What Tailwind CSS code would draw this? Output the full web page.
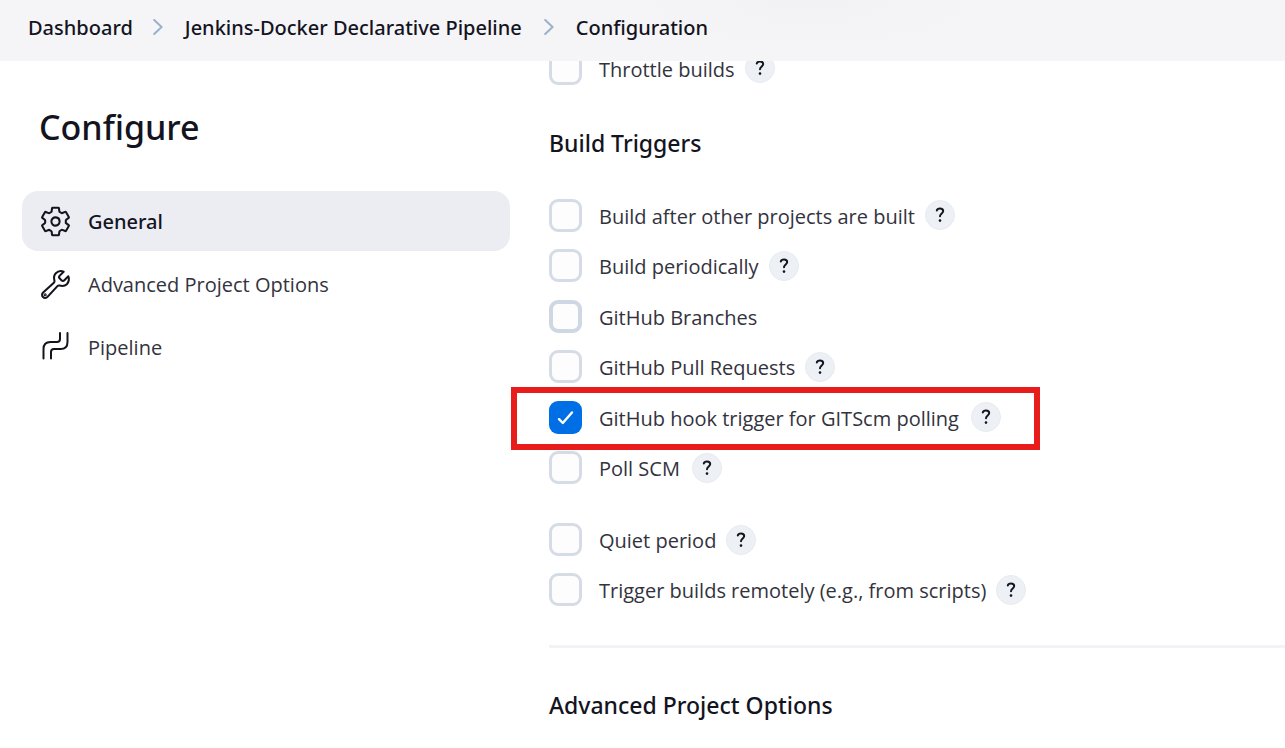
<!DOCTYPE html>
<html lang="en">
<head>
<meta charset="utf-8">
<meta name="viewport" content="width=device-width, initial-scale=1">
<title>Configure</title>
<script src="https://cdn.jsdelivr.net/npm/@tailwindcss/browser@4"></script>
</head>
<body class="bg-white font-['Open_Sans','Noto_Sans',sans-serif] text-[20px] leading-[33px] text-[#33333e] overflow-hidden">
<header class="sticky top-0 z-10 h-[61px] bg-[#f5f5f7] bg-[radial-gradient(ellipse_180px_50px_at_810px_0px,#f2f2f4,#f5f5f7)] pl-7 pb-[7px] flex items-center">
  <nav aria-label="Breadcrumb" class="flex items-center font-['Noto_Sans',sans-serif] font-medium text-[#14141f] whitespace-nowrap">
    <a href="#">Dashboard</a>
    <svg class="w-[10px] h-4 ml-5 mr-[22px]" viewBox="0 0 10 16" fill="none" stroke="#9bb0cc" stroke-width="2" stroke-linecap="round" stroke-linejoin="round" aria-hidden="true"><path d="M1.2 1 8.6 8 1.2 15"/></svg>
    <a href="#">Jenkins-Docker Declarative Pipeline</a>
    <svg class="w-[10px] h-4 ml-[22px] mr-[22px]" viewBox="0 0 10 16" fill="none" stroke="#9bb0cc" stroke-width="2" stroke-linecap="round" stroke-linejoin="round" aria-hidden="true"><path d="M1.2 1 8.6 8 1.2 15"/></svg>
    <a href="#">Configuration</a>
  </nav>
</header>
<div class="flex">
  <aside class="w-[510px] shrink-0 pl-[22px] pt-[42px]">
    <h1 class="pl-[17px] font-['Noto_Sans',sans-serif] text-[34px] leading-[48px] font-medium text-[#14141f]">Configure</h1>
    <nav aria-label="Sections" class="mt-10 flex flex-col gap-[3px]">
      <a href="#general" class="flex items-center h-[60px] rounded-2xl bg-[#ecedf3] pl-[17px] gap-4 font-['Noto_Sans',sans-serif] font-medium text-[#14141f]">
        <svg class="size-[33px]" viewBox="0 0 512 512" fill="none" stroke="#14141f" stroke-width="32" stroke-linecap="round" stroke-linejoin="round" aria-hidden="true"><path d="M262.29 192.31a64 64 0 1 0 57.4 57.4 64.13 64.13 0 0 0-57.4-57.4zM416.39 256a154.34 154.34 0 0 1-1.53 20.79l45.21 35.46a10.81 10.81 0 0 1 2.45 13.75l-42.77 74a10.81 10.81 0 0 1-13.14 4.59l-44.9-18.08a16.11 16.11 0 0 0-15.17 1.75A164.48 164.48 0 0 1 325 400.8a15.94 15.94 0 0 0-8.82 12.14l-6.73 47.89a11.08 11.08 0 0 1-10.68 9.17h-85.54a11.11 11.11 0 0 1-10.69-8.87l-6.72-47.82a16.07 16.07 0 0 0-9-12.22 155.3 155.3 0 0 1-21.46-12.57 16 16 0 0 0-15.11-1.71l-44.89 18.07a10.81 10.81 0 0 1-13.14-4.58l-42.77-74a10.8 10.8 0 0 1 2.45-13.75l38.21-30a16.05 16.05 0 0 0 6-14.08c-.36-4.17-.58-8.33-.58-12.5s.21-8.27.58-12.35a16 16 0 0 0-6.07-13.94l-38.19-30A10.81 10.81 0 0 1 49.48 186l42.77-74a10.81 10.81 0 0 1 13.14-4.59l44.9 18.08a16.11 16.11 0 0 0 15.17-1.75A164.48 164.48 0 0 1 187 111.2a15.94 15.94 0 0 0 8.82-12.14l6.73-47.89A11.08 11.08 0 0 1 213.23 42h85.54a11.11 11.11 0 0 1 10.69 8.87l6.72 47.82a16.07 16.07 0 0 0 9 12.22 155.3 155.3 0 0 1 21.46 12.57 16 16 0 0 0 15.11 1.71l44.89-18.07a10.81 10.81 0 0 1 13.14 4.58l42.77 74a10.8 10.8 0 0 1-2.45 13.75l-38.21 30a16.05 16.05 0 0 0-6.05 14.08c.33 4.14.55 8.3.55 12.47z"/></svg>
        General
      </a>
      <a href="#advanced" class="flex items-center h-[60px] pl-[17px] gap-4">
        <svg class="size-[33px]" viewBox="0 0 512 512" fill="none" stroke="#14141f" stroke-width="32" stroke-linecap="round" stroke-linejoin="round" aria-hidden="true"><path d="M393.87 190a32.1 32.1 0 0 1-45.25 0l-26.57-26.57a32.09 32.09 0 0 1 0-45.26L382.19 58a1 1 0 0 0-.3-1.64c-38.82-16.64-89.15-8.16-121.11 23.57-30.58 30.35-32.32 76-21.12 115.84a31.93 31.93 0 0 1-9.06 32.08L64 380a48.17 48.17 0 1 0 68 68l153.86-167a31.93 31.93 0 0 1 31.6-9.13c39.54 10.59 84.54 8.6 114.72-21.19 32.49-32 39.5-88.56 23.75-120.93a1 1 0 0 0-1.6-.26z"/><circle cx="96" cy="416" r="8" fill="#14141f"/></svg>
        Advanced Project Options
      </a>
      <a href="#pipeline" class="flex items-center h-[60px] pl-[17px] gap-4">
        <svg class="size-[33px]" viewBox="0 0 33 33" fill="none" stroke="#14141f" stroke-width="2" stroke-linecap="round" aria-hidden="true"><path d="M21 2v6q0 3-3 3h-6.500q-7 0-7 7v9.500M28.500 2v9q0 7-7 7H15q-3 0-3 3v6.500"/></svg>
        Pipeline
      </a>
    </nav>
  </aside>
  <main class="flex-1 pl-[39px] -mt-[9px]">
    <div class="flex items-start">
      <input id="c0" type="checkbox" class="appearance-none size-[33px] rounded-[9px] border-3 border-[#d5dce6] bg-[#fdfdfd] shrink-0">
      <label for="c0" class="pl-[17px] pr-[10px] mt-px">Throttle builds</label>
      <button type="button" aria-label="Help: Throttle builds" class="mt-px size-[30px] rounded-full border border-[#e6ebf0] bg-[#edf1f5] flex items-center justify-center"><svg class="w-[10px] h-4" viewBox="0 0 10 16" fill="none" stroke="#14141f" stroke-width="2" stroke-linecap="round" stroke-linejoin="round"><path d="M1.8 3.6Q2.3 1.5 5 1.5q3.2 0 3.2 2.6c0 2.3-3.2 2.4-3.2 5.2"/><path d="M5 13.6v.01" stroke-width="2.6"/></svg></button>
    </div>
    <h2 class="mt-10 font-['Noto_Sans',sans-serif] text-[23px] leading-[34px] font-medium text-[#14141f]">Build Triggers</h2>
    <div class="mt-[39px]">
      <div class="flex items-start h-[50px]">
        <input id="c1" type="checkbox" class="appearance-none size-[33px] rounded-[9px] border-3 border-[#d5dce6] bg-[#fdfdfd] shrink-0">
        <label for="c1" class="pl-[17px] pr-[10px] mt-px">Build after other projects are built</label>
        <button type="button" aria-label="Help: Build after other projects are built" class="mt-px size-[30px] rounded-full border border-[#e6ebf0] bg-[#edf1f5] flex items-center justify-center"><svg class="w-[10px] h-4" viewBox="0 0 10 16" fill="none" stroke="#14141f" stroke-width="2" stroke-linecap="round" stroke-linejoin="round"><path d="M1.8 3.6Q2.3 1.5 5 1.5q3.2 0 3.2 2.6c0 2.3-3.2 2.4-3.2 5.2"/><path d="M5 13.6v.01" stroke-width="2.6"/></svg></button>
      </div>
      <div class="flex items-start h-[51px]">
        <input id="c2" type="checkbox" class="appearance-none size-[33px] rounded-[9px] border-3 border-[#d5dce6] bg-[#fdfdfd] shrink-0">
        <label for="c2" class="pl-[17px] pr-[10px] mt-px">Build periodically</label>
        <button type="button" aria-label="Help: Build periodically" class="mt-[2px] size-[30px] rounded-full border border-[#e6ebf0] bg-[#edf1f5] flex items-center justify-center"><svg class="w-[10px] h-4" viewBox="0 0 10 16" fill="none" stroke="#14141f" stroke-width="2" stroke-linecap="round" stroke-linejoin="round"><path d="M1.8 3.6Q2.3 1.5 5 1.5q3.2 0 3.2 2.6c0 2.3-3.2 2.4-3.2 5.2"/><path d="M5 13.6v.01" stroke-width="2.6"/></svg></button>
      </div>
      <div class="flex items-start h-[50px]">
        <input id="c3" type="checkbox" class="appearance-none size-[33px] rounded-[9px] border-4 border-[#ced7e3] bg-[#fdfdfd] shrink-0">
        <label for="c3" class="pl-[17px] pr-[10px] mt-px">GitHub Branches</label>
      </div>
      <div class="flex items-start h-[51px]">
        <input id="c4" type="checkbox" class="appearance-none size-[33px] rounded-[9px] border-3 border-[#d5dce6] bg-[#fdfdfd] shrink-0">
        <label for="c4" class="pl-[17px] pr-[10px] mt-px">GitHub Pull Requests</label>
        <button type="button" aria-label="Help: GitHub Pull Requests" class="mt-[2px] size-[30px] rounded-full border border-[#e6ebf0] bg-[#edf1f5] flex items-center justify-center"><svg class="w-[10px] h-4" viewBox="0 0 10 16" fill="none" stroke="#14141f" stroke-width="2" stroke-linecap="round" stroke-linejoin="round"><path d="M1.8 3.6Q2.3 1.5 5 1.5q3.2 0 3.2 2.6c0 2.3-3.2 2.4-3.2 5.2"/><path d="M5 13.6v.01" stroke-width="2.6"/></svg></button>
      </div>
      <div class="relative flex items-start h-[50px]">
        <div class="absolute -left-[38px] -top-[14px] w-[529px] h-[63px] border-6 border-[#e91c1c] pointer-events-none"></div>
        <span class="relative size-[33px] shrink-0">
          <input id="c5" type="checkbox" checked class="block appearance-none size-[33px] rounded-[9px] bg-[#006fe6]">
          <svg class="absolute inset-0 pointer-events-none" viewBox="0 0 33 33" fill="none" stroke="#fff" stroke-width="2.4" stroke-linecap="round" stroke-linejoin="round" aria-hidden="true"><path d="M10 18.2 13.8 22 23 11.5"/></svg>
        </span>
        <label for="c5" class="pl-[17px] pr-3 mt-px">GitHub hook trigger for GITScm polling</label>
        <button type="button" aria-label="Help: GitHub hook trigger for GITScm polling" class="mt-px size-[30px] rounded-full border border-[#e6ebf0] bg-[#edf1f5] flex items-center justify-center"><svg class="w-[10px] h-4" viewBox="0 0 10 16" fill="none" stroke="#14141f" stroke-width="2" stroke-linecap="round" stroke-linejoin="round"><path d="M1.8 3.6Q2.3 1.5 5 1.5q3.2 0 3.2 2.6c0 2.3-3.2 2.4-3.2 5.2"/><path d="M5 13.6v.01" stroke-width="2.6"/></svg></button>
      </div>
      <div class="flex items-start h-[50px]">
        <input id="c6" type="checkbox" class="appearance-none size-[33px] rounded-[9px] border-3 border-[#d5dce6] bg-[#fdfdfd] shrink-0">
        <label for="c6" class="pl-[17px] pr-3 mt-px">Poll SCM</label>
        <button type="button" aria-label="Help: Poll SCM" class="mt-[2px] size-[30px] rounded-full border border-[#e6ebf0] bg-[#edf1f5] flex items-center justify-center"><svg class="w-[10px] h-4" viewBox="0 0 10 16" fill="none" stroke="#14141f" stroke-width="2" stroke-linecap="round" stroke-linejoin="round"><path d="M1.8 3.6Q2.3 1.5 5 1.5q3.2 0 3.2 2.6c0 2.3-3.2 2.4-3.2 5.2"/><path d="M5 13.6v.01" stroke-width="2.6"/></svg></button>
      </div>
    </div>
    <div class="mt-[22px]">
      <div class="flex items-start h-[50px]">
        <input id="c7" type="checkbox" class="appearance-none size-[33px] rounded-[9px] border-3 border-[#d5dce6] bg-[#fdfdfd] shrink-0">
        <label for="c7" class="pl-[17px] pr-[10px] mt-px">Quiet period</label>
        <button type="button" aria-label="Help: Quiet period" class="mt-[2px] size-[30px] rounded-full border border-[#e6ebf0] bg-[#edf1f5] flex items-center justify-center"><svg class="w-[10px] h-4" viewBox="0 0 10 16" fill="none" stroke="#14141f" stroke-width="2" stroke-linecap="round" stroke-linejoin="round"><path d="M1.8 3.6Q2.3 1.5 5 1.5q3.2 0 3.2 2.6c0 2.3-3.2 2.4-3.2 5.2"/><path d="M5 13.6v.01" stroke-width="2.6"/></svg></button>
      </div>
      <div class="flex items-start h-[50px]">
        <input id="c8" type="checkbox" class="appearance-none size-[33px] rounded-[9px] border-3 border-[#d5dce6] bg-[#fdfdfd] shrink-0">
        <label for="c8" class="pl-[17px] pr-[10px] mt-px">Trigger builds remotely (e.g., from scripts)</label>
        <button type="button" aria-label="Help: Trigger builds remotely" class="mt-[2px] size-[30px] rounded-full border border-[#e6ebf0] bg-[#edf1f5] flex items-center justify-center"><svg class="w-[10px] h-4" viewBox="0 0 10 16" fill="none" stroke="#14141f" stroke-width="2" stroke-linecap="round" stroke-linejoin="round"><path d="M1.8 3.6Q2.3 1.5 5 1.5q3.2 0 3.2 2.6c0 2.3-3.2 2.4-3.2 5.2"/><path d="M5 13.6v.01" stroke-width="2.6"/></svg></button>
      </div>
    </div>
    <hr class="mt-[22px] border-t-3 border-[#f3f3f7]">
    <h2 class="mt-10 font-['Noto_Sans',sans-serif] text-[23px] leading-[34px] font-medium text-[#14141f]">Advanced Project Options</h2>
  </main>
</div>
</body>
</html>
